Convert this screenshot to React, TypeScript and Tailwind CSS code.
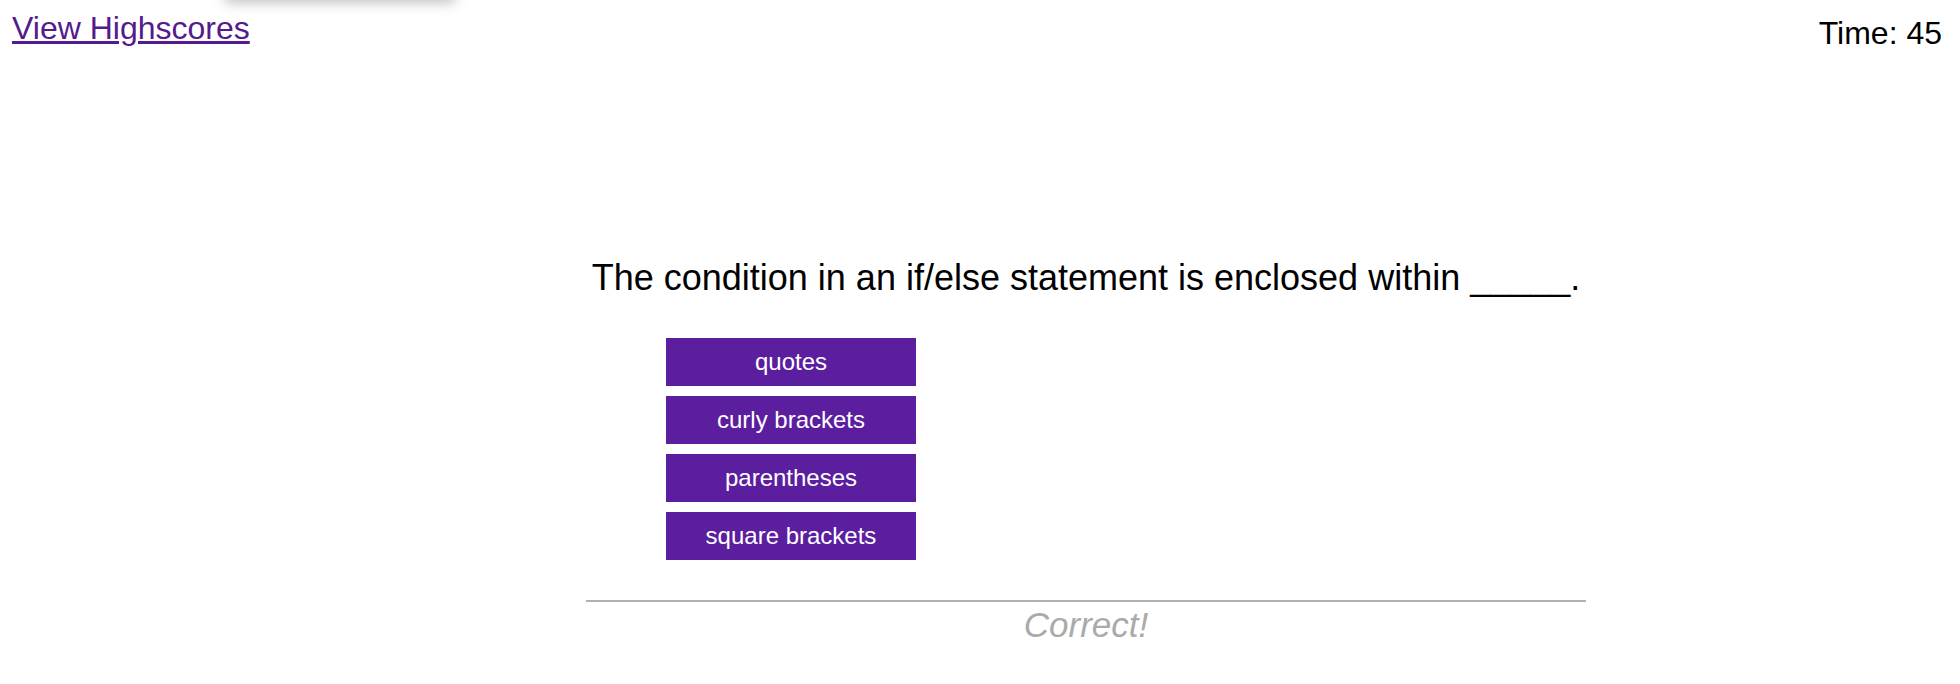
import React from "react";

const answers = ["quotes", "curly brackets", "parentheses", "square brackets"];

export default function App() {
  return (
    <div className="relative min-h-screen overflow-hidden bg-white font-['Liberation_Sans',Arial,sans-serif] text-black">
      {/* shadow of a panel sitting just above the viewport */}
      <div className="absolute left-[225px] top-[-40px] h-[40px] w-[230px] bg-white shadow-[0_2px_14px_rgba(0,0,0,0.28)]" />

      <header className="flex items-start justify-between pl-[12px] pr-[18px]">
        <a href="#" className="mt-[10px] text-[32px] leading-[36px] text-[#551a8b] underline">
          View Highscores
        </a>
        <div className="mt-[15px] text-[32px] leading-[36px]">Time: 45</div>
      </header>

      <main className="ml-[586px] mt-[207px] w-[1000px]">
        <h2 className="text-center text-[36px] leading-[40px]">
          The condition in an if/else statement is enclosed within _____.
        </h2>

        <ul className="mt-[40px] flex flex-col gap-[10px] pl-[80px]">
          {answers.map((a) => (
            <li key={a}>
              <button className="flex h-[48px] w-[250px] items-center justify-center bg-[#5b1e9f] text-[24px] text-white">
                {a}
              </button>
            </li>
          ))}
        </ul>

        <div className="mt-[40px] h-[2px] bg-[#b0b0b0]" />
        <p className="mt-[3px] text-center text-[35px] italic leading-[40px] text-[#aaaaaa]">
          Correct!
        </p>
      </main>
    </div>
  );
}
